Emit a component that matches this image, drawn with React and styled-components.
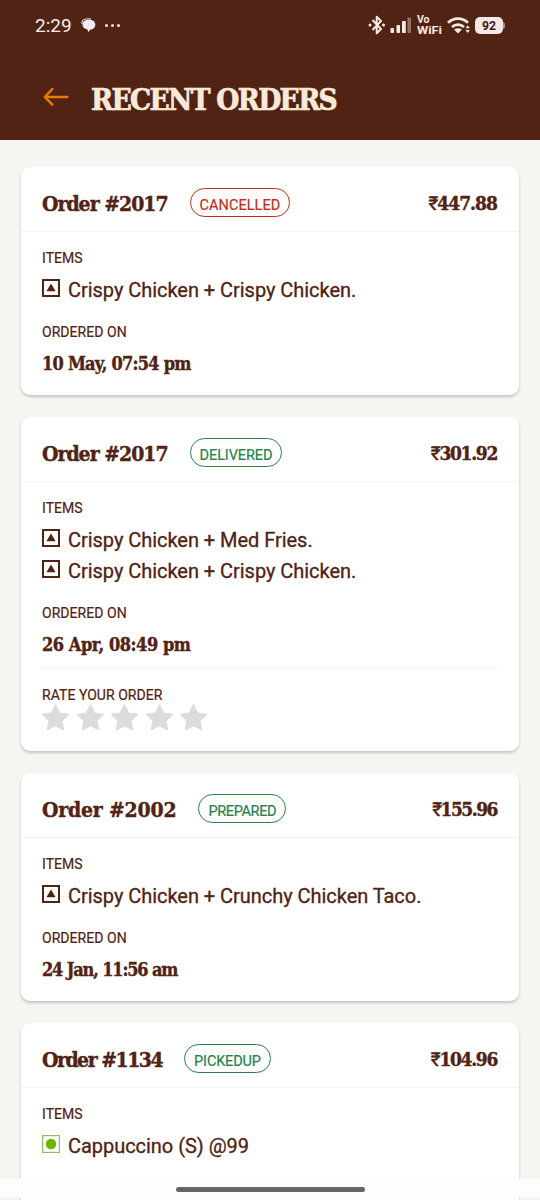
import React from "react";
import styled, { createGlobalStyle } from "styled-components";

const orders = [
  {
    number: "2017",
    status: "CANCELLED",
    price: "447.88",
    items: [{ name: "Crispy Chicken + Crispy Chicken." }],
    date: "10 May, 07:54 pm",
    tracking: { number: -1, badge: 0.05, date: -0.75, price: -0.95 },
  },
  {
    number: "2017",
    status: "DELIVERED",
    price: "301.92",
    items: [
      { name: "Crispy Chicken + Med Fries." },
      { name: "Crispy Chicken + Crispy Chicken." },
    ],
    date: "26 Apr, 08:49 pm",
    rate: true,
    tracking: { number: -1, badge: -0.1, date: -0.45, price: -1.3 },
  },
  {
    number: "2002",
    status: "PREPARED",
    price: "155.96",
    items: [{ name: "Crispy Chicken + Crunchy Chicken Taco." }],
    date: "24 Jan, 11:56 am",
    tracking: { number: -0.2, badge: -0.35, date: -1.15, price: -1.5 },
  },
  {
    number: "1134",
    status: "PICKEDUP",
    price: "104.96",
    items: [{ name: "Cappuccino (S) @99", veg: true }],
    tracking: { number: -1.5, badge: -0.15, price: -1.3 },
  },
];

const StatusIcons = () => (
  <svg width="138" height="24" viewBox="0 0 138 24">
    {/* bluetooth */}
    <path d="M4.5 7 13 16l-4.300 4.300V3.700L13 8l-8.500 9" fill="none" stroke="#f6e9e2" strokeWidth="2" strokeLinejoin="round" />
    <circle cx="2" cy="12" r="1.500" fill="#f6e9e2" />
    <circle cx="15.500" cy="12" r="1.500" fill="#f6e9e2" />
    {/* signal */}
    <g fill="#f6e9e2">
      <rect x="22.500" y="15" width="3.500" height="5" rx="0.800" />
      <rect x="28.500" y="12" width="3.500" height="8" rx="0.800" />
      <rect x="34" y="8" width="3.800" height="12" rx="0.800" />
      <rect x="39.500" y="4.500" width="3.500" height="15.500" rx="0.800" opacity="0.4" />
    </g>
    <g fill="#f6e9e2" fontFamily="Roboto, sans-serif" fontWeight="700">
      <text x="49" y="10" fontSize="10.500">Vo</text>
      <text x="49" y="21" fontSize="11" textLength="25" lengthAdjust="spacingAndGlyphs">WiFi</text>
    </g>
    {/* wifi */}
    <g fill="none" stroke="#f6e9e2" strokeWidth="2.700">
      <path d="M80 9.800a14 14 0 0 1 20 0" />
      <path d="M84 14a8.600 8.600 0 0 1 12 0" />
    </g>
    <path d="M86 16.600q4-2.500 8 0l-4 4z" fill="#f6e9e2" />
    <path d="m97.500 15.300 2.200-3 2.200 3zm0 1.800h4.400l-2.200 3z" fill="#f6e9e2" />
    {/* battery */}
    <rect x="131" y="9" width="6" height="7" rx="2.500" fill="#a98d84" />
    <rect x="107" y="4" width="28" height="17" rx="5" fill="#f3e9e6" />
    <text x="121" y="17.300" fontSize="13.500" fontWeight="700" fontFamily="Roboto, sans-serif" textAnchor="middle" textLength="14" lengthAdjust="spacingAndGlyphs" fill="#3a1a10">92</text>
  </svg>
);

const ChatIcon = () => (
  <svg width="15" height="15" viewBox="0 0 15 15">
    <path d="M.8 6C.3 2.800 3 .8 6 .8h4" fill="none" stroke="#cfc0bb" strokeWidth="1.300" />
    <path d="M8 1.800c3.800 0 6.300 2 6.300 4.900s-2.300 4.800-5 5L7.300 14l-.9-2.500C3.400 11 1.500 9 1.500 6.500c0-2.700 2.700-4.700 6.500-4.700z" fill="#f3eaf2" />
  </svg>
);

const BackArrow = () => (
  <svg width="26" height="20" viewBox="0 0 26 20">
    <path d="M24.200 10H2M9.300 2 1.800 10l7.500 7.700" fill="none" stroke="#e87b06" strokeWidth="2.500" strokeLinecap="round" strokeLinejoin="round" />
  </svg>
);

const NonVegMark = () => (
  <svg width="18" height="18" viewBox="0 0 18 18">
    <rect x="1" y="1" width="16" height="16" fill="none" stroke="#502314" strokeWidth="2" />
    <path d="m9 4.500 4.600 7.800H4.400z" fill="#502314" />
  </svg>
);

const VegMark = () => (
  <svg width="18" height="18" viewBox="0 0 18 18">
    <rect x="0.600" y="0.600" width="16.800" height="16.800" fill="#fff" stroke="#92c255" strokeWidth="1.200" />
    <circle cx="9" cy="9" r="5.200" fill="#6cb600" />
  </svg>
);

const Star = () => (
  <svg width="27" height="27" viewBox="0 0 27 27">
    <path d="m13.500 1.500 3.700 8 8.500 1-6.200 6 1.600 8.600-7.600-4-7.600 4 1.600-8.600-6.200-6 8.500-1z" fill="#dcdcdc" stroke="#dcdcdc" strokeWidth="2.200" strokeLinejoin="round" />
  </svg>
);

const OrderCard = ({ order }) => (
  <Card>
    <CardHeader>
      <OrderNumber $tracking={order.tracking.number}>Order #{order.number}</OrderNumber>
      <Badge $cancelled={order.status === "CANCELLED"} $tracking={order.tracking.badge}>
        {order.status}
      </Badge>
      <Price $tracking={order.tracking.price}>
        <Rupee>₹</Rupee>
        {order.price}
      </Price>
    </CardHeader>
    <CardBody>
      <Label>ITEMS</Label>
      <Items>
        {order.items.map((item) => (
          <Item key={item.name}>
            {item.veg ? <VegMark /> : <NonVegMark />}
            <ItemName>{item.name}</ItemName>
          </Item>
        ))}
      </Items>
      {order.date && (
        <>
          <Label>ORDERED ON</Label>
          <OrderDate $tracking={order.tracking.date}>{order.date}</OrderDate>
        </>
      )}
      {order.rate && (
        <Rating>
          <Label>RATE YOUR ORDER</Label>
          <Stars>
            {[1, 2, 3, 4, 5].map((n) => (
              <Star key={n} />
            ))}
          </Stars>
        </Rating>
      )}
    </CardBody>
  </Card>
);

const App = () => {
  return (
    <Screen>
      <GlobalStyle />
      <Header>
        <StatusBar>
          <Clock>2:29</Clock>
          <ChatIcon />
          <Dots>
            <i />
            <i />
            <i />
          </Dots>
          <StatusRight>
            <StatusIcons />
          </StatusRight>
        </StatusBar>
        <TitleBar>
          <BackArrow />
          <Title>RECENT ORDERS</Title>
        </TitleBar>
      </Header>
      <OrderList>
        {orders.map((order) => (
          <OrderCard key={order.number + order.status} order={order} />
        ))}
      </OrderList>
      <NavBar>
        <NavHandle />
      </NavBar>
    </Screen>
  );
};

const GlobalStyle = createGlobalStyle`
  * {
    box-sizing: border-box;
  }

  body {
    margin: 0;
    overflow: hidden;
    background: #f6f5f2;
  }

  h1, h2, p {
    margin: 0;
  }

  svg {
    display: block;
    flex: none;
  }
`;

const display = `"DejaVu Serif Condensed", "DejaVu Serif", serif`;
const sans = `Roboto, "Liberation Sans", sans-serif`;

const Screen = styled.div`
  position: relative;
  width: 540px;
  height: 1200px;
  overflow: hidden;
  background: #f6f5f2;
  color: #502314;
  font-family: ${sans};
`;

const Header = styled.header`
  height: 140px;
  background: #502314;
`;

const StatusBar = styled.div`
  display: flex;
  align-items: center;
  height: 50px;
  padding: 0 34px 0 35px;
`;

const Clock = styled.span`
  width: 46px;
  padding-top: 1px;
  color: #f8ece6;
  font-size: 19px;
  line-height: 24px;
`;

const Dots = styled.div`
  display: flex;
  gap: 3px;
  margin-left: 9px;

  i {
    width: 3px;
    height: 3px;
    border-radius: 50%;
    background: #f3e6df;
  }
`;

const StatusRight = styled.div`
  margin-left: auto;
`;

const TitleBar = styled.div`
  display: flex;
  align-items: center;
  gap: 22px;
  height: 94px;
  padding-left: 43px;
`;

const Title = styled.h1`
  padding-top: 6px;
  color: #f9e9d8;
  font-family: ${display};
  font-size: 29.500px;
  font-weight: 700;
  letter-spacing: -1.650px;
  line-height: 36px;
  white-space: nowrap;
  -webkit-text-stroke: 0.700px currentColor;
`;

const OrderList = styled.main`
  display: flex;
  flex-direction: column;
  gap: 22px;
  padding: 27px 21px 0;
`;

const Card = styled.article`
  flex: none;
  min-height: 228px;
  background: #fff;
  border-radius: 9px;
  box-shadow: 0 2px 3px rgba(0, 0, 0, 0.2);
`;

const CardHeader = styled.div`
  display: flex;
  align-items: center;
  height: 65px;
  padding: 7px 22px 0 21px;
  border-bottom: 1px solid #f4f3f1;
`;

const OrderNumber = styled.h2`
  padding-top: 2px;
  font-family: ${display};
  font-size: 21px;
  font-weight: 700;
  letter-spacing: ${({ $tracking }) => $tracking}px;
  line-height: 30px;
  white-space: nowrap;
  -webkit-text-stroke: 0.400px currentColor;
`;

const Badge = styled.span`
  height: 29px;
  margin-left: 22px;
  padding: 2px 9px 0;
  border: 1.500px solid currentColor;
  border-radius: 15px;
  color: ${({ $cancelled }) => ($cancelled ? "#c42e18" : "#26824a")};
  font-size: 14.500px;
  letter-spacing: ${({ $tracking }) => $tracking}px;
  line-height: 29px;
  -webkit-text-stroke: 0.200px currentColor;
`;

const Price = styled.p`
  margin-left: auto;
  padding-top: 2px;
  font-family: ${display};
  font-size: 19px;
  font-weight: 700;
  letter-spacing: ${({ $tracking }) => $tracking}px;
  line-height: 28px;
  -webkit-text-stroke: 0.400px currentColor;
`;

const Rupee = styled.span`
  font-family: ${sans};
  font-weight: 400;
`;

const CardBody = styled.div`
  padding: 15px 21px 20px;
`;

const Label = styled.p`
  padding-top: 2px;
  font-size: 14px;
  letter-spacing: 0.05px;
  line-height: 18px;
  -webkit-text-stroke: 0.200px currentColor;
`;

const Items = styled.div`
  padding: 7px 0 16px;
`;

const Item = styled.div`
  display: flex;
  align-items: center;
  gap: 8px;
  height: 31px;

  svg {
    margin-bottom: 4px;
  }
`;

const ItemName = styled.span`
  padding-top: 2px;
  font-size: 20px;
  letter-spacing: -0.040px;
  line-height: 29px;
  white-space: nowrap;
  -webkit-text-stroke: 0.300px currentColor;
`;

const OrderDate = styled.p`
  margin-top: 10px;
  padding-top: 2px;
  font-family: ${display};
  font-size: 18px;
  font-weight: 700;
  letter-spacing: ${({ $tracking }) => $tracking}px;
  line-height: 22px;
  -webkit-text-stroke: 0.400px currentColor;
`;

const Rating = styled.div`
  margin-top: 12px;
  padding-top: 15px;
  border-top: 1px solid #f4f3f1;
`;

const Stars = styled.div`
  display: flex;
  gap: 7.500px;
`;

const NavBar = styled.div`
  position: absolute;
  left: 0;
  right: 0;
  bottom: 3px;
  display: flex;
  justify-content: center;
  height: 18px;
  padding-top: 8px;
  background: #fefefe;
`;

const NavHandle = styled.div`
  width: 189px;
  height: 5px;
  border-radius: 3px;
  background: #666;
`;

export default App;
